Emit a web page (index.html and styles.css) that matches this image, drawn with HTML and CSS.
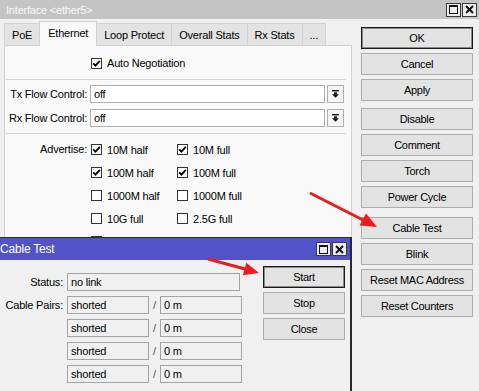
FILE: index.html
```html
<!DOCTYPE html>
<html>
<head>
<meta charset="utf-8">
<link rel="stylesheet" href="styles.css">
</head>
<body>
<div class="win main">
  <div class="titlebar inactive">
    <span class="title">Interface &lt;ether5&gt;</span>
    <div class="tbtns">
      <span class="tbtn"><svg width="9" height="9" viewBox="0 0 9 9"><rect x="0.5" y="0.5" width="8" height="8" fill="none" stroke="#111" stroke-width="1"/><rect x="0" y="0" width="9" height="2" fill="#111"/></svg></span>
      <span class="tbtn"><svg width="9" height="9" viewBox="0 0 9 9"><path d="M1 1L8 8M8 1L1 8" stroke="#111" stroke-width="2"/></svg></span>
    </div>
  </div>
  <div class="body">
    <div class="leftcol">
      <div class="tabs">
        <span class="tab">PoE</span>
        <span class="tab sel">Ethernet</span>
        <span class="tab">Loop Protect</span>
        <span class="tab">Overall Stats</span>
        <span class="tab">Rx Stats</span>
        <span class="tab">...</span>
      </div>
      <div class="panel">
        <div class="row autoneg">
          <span class="lbl"></span>
          <span class="cb on"><svg width="9" height="9" viewBox="0 0 9 9"><path d="M1.2 4.3L3.5 6.7L7.8 1.8" fill="none" stroke="#000" stroke-width="1.8"/></svg></span>
          <span class="cbl">Auto Negotiation</span>
        </div>
        <div class="sep s1"></div>
        <div class="row field tx">
          <span class="lbl">Tx Flow Control:</span>
          <span class="input">off</span>
          <span class="dd"><svg width="7" height="8" viewBox="0 0 7 8"><rect x="0" y="0" width="7" height="1.4" fill="#111"/><rect x="2" y="2.4" width="3" height="2" fill="#111"/><path d="M0 4.2H7L3.5 7.8Z" fill="#111"/></svg></span>
        </div>
        <div class="row field rx">
          <span class="lbl">Rx Flow Control:</span>
          <span class="input">off</span>
          <span class="dd"><svg width="7" height="8" viewBox="0 0 7 8"><rect x="0" y="0" width="7" height="1.4" fill="#111"/><rect x="2" y="2.4" width="3" height="2" fill="#111"/><path d="M0 4.2H7L3.5 7.8Z" fill="#111"/></svg></span>
        </div>
        <div class="sep s2"></div>
        <div class="adv">
          <span class="lbl">Advertise:</span>
          <div class="advgrid">
            <div class="opt"><span class="cb on"><svg width="9" height="9" viewBox="0 0 9 9"><path d="M1.2 4.3L3.5 6.7L7.8 1.8" fill="none" stroke="#000" stroke-width="1.8"/></svg></span><span class="cbl">10M half</span></div>
            <div class="opt"><span class="cb on"><svg width="9" height="9" viewBox="0 0 9 9"><path d="M1.2 4.3L3.5 6.7L7.8 1.8" fill="none" stroke="#000" stroke-width="1.8"/></svg></span><span class="cbl">10M full</span></div>
            <div class="opt"><span class="cb on"><svg width="9" height="9" viewBox="0 0 9 9"><path d="M1.2 4.3L3.5 6.7L7.8 1.8" fill="none" stroke="#000" stroke-width="1.8"/></svg></span><span class="cbl">100M half</span></div>
            <div class="opt"><span class="cb on"><svg width="9" height="9" viewBox="0 0 9 9"><path d="M1.2 4.3L3.5 6.7L7.8 1.8" fill="none" stroke="#000" stroke-width="1.8"/></svg></span><span class="cbl">100M full</span></div>
            <div class="opt"><span class="cb"></span><span class="cbl">1000M half</span></div>
            <div class="opt"><span class="cb"></span><span class="cbl">1000M full</span></div>
            <div class="opt"><span class="cb"></span><span class="cbl">10G full</span></div>
            <div class="opt"><span class="cb"></span><span class="cbl">2.5G full</span></div>
            <div class="opt"><span class="cb"></span><span class="cbl">5G full</span></div>
          </div>
        </div>
      </div>
    </div>
    <div class="btncol">
      <div class="grp">
        <span class="btn def">OK</span>
        <span class="btn">Cancel</span>
        <span class="btn">Apply</span>
      </div>
      <div class="grp g2">
        <span class="btn">Disable</span>
        <span class="btn">Comment</span>
        <span class="btn">Torch</span>
        <span class="btn">Power Cycle</span>
      </div>
      <div class="grp g3">
        <span class="btn">Cable Test</span>
        <span class="btn">Blink</span>
        <span class="btn">Reset MAC Address</span>
        <span class="btn">Reset Counters</span>
      </div>
    </div>
  </div>
</div>

<div class="win cable">
  <div class="titlebar active">
    <span class="title">Cable Test</span>
    <div class="tbtns">
      <span class="tbtn"><svg width="9" height="9" viewBox="0 0 9 9"><rect x="0.5" y="0.5" width="8" height="8" fill="none" stroke="#111" stroke-width="1"/><rect x="0" y="0" width="9" height="2" fill="#111"/></svg></span>
      <span class="tbtn"><svg width="9" height="9" viewBox="0 0 9 9"><path d="M1 1L8 8M8 1L1 8" stroke="#111" stroke-width="2"/></svg></span>
    </div>
  </div>
  <div class="cbody">
    <div class="cform">
      <div class="crow">
        <span class="clbl">Status:</span>
        <span class="ro wide">no link</span>
      </div>
      <div class="crow">
        <span class="clbl">Cable Pairs:</span>
        <span class="ro">shorted</span><span class="slash">/</span><span class="ro">0 m</span>
      </div>
      <div class="crow">
        <span class="clbl"></span>
        <span class="ro">shorted</span><span class="slash">/</span><span class="ro">0 m</span>
      </div>
      <div class="crow">
        <span class="clbl"></span>
        <span class="ro">shorted</span><span class="slash">/</span><span class="ro">0 m</span>
      </div>
      <div class="crow">
        <span class="clbl"></span>
        <span class="ro">shorted</span><span class="slash">/</span><span class="ro">0 m</span>
      </div>
    </div>
    <div class="cbtns">
      <span class="btn def">Start</span>
      <span class="btn">Stop</span>
      <span class="btn">Close</span>
    </div>
  </div>
</div>

<svg class="arrows" width="479" height="391" viewBox="0 0 479 391">
  <line x1="310" y1="193" x2="363" y2="220" stroke="#ec1c1c" stroke-width="3"/>
  <path d="M377 227L359.6 225.6L366 213.6Z" fill="#ec1c1c"/>
  <line x1="208" y1="259" x2="246" y2="269.3" stroke="#ec1c1c" stroke-width="3"/>
  <path d="M259 273L242.9 275.3L246.3 262.8Z" fill="#ec1c1c"/>
</svg>
</body>
</html>
```
FILE: styles.css
```css
* { box-sizing: border-box; }
html, body { margin: 0; padding: 0; }
body {
  width: 479px;
  height: 391px;
  overflow: hidden;
  position: relative;
  background: #f0f0f0;
  font-family: "Liberation Sans", Arial, sans-serif;
  font-size: 11px;
  letter-spacing: -0.2px;
  color: #000;
}
.win { background: #f0f0f0; }
.main { height: 391px; display: flex; flex-direction: column; }
.titlebar {
  height: 19px;
  display: flex;
  align-items: center;
  justify-content: space-between;
  flex-shrink: 0;
}
.titlebar.inactive { background: #c4c4c4; color: #f7f7f7; padding: 0 2px 0 6px; }
.titlebar.active { background: #5353c9; color: #fff; height: 22px; padding: 0 3px 0 5px; font-size: 12px; }
.tbtns { display: flex; gap: 1px; }
.tbtn {
  width: 15px; height: 14px;
  border: 1px solid #3a3a3a;
  background: #ececec;
  display: flex; align-items: center; justify-content: center;
}
.body { flex: 1; display: flex; min-height: 0; }
.leftcol { margin-left: 4px; width: 348px; display: flex; flex-direction: column; }
.tabs { display: flex; height: 26px; align-items: flex-end; position: relative; z-index: 1; }
.tab {
  height: 22px;
  padding: 0 7px;
  display: flex; align-items: center;
  background: #e3e3e3;
  border: 1px solid #d2d2d2;
  border-bottom: none;
  margin-right: -1px;
}
.tab.sel {
  height: 25px;
  background: #f9f9f9;
  margin-bottom: -1px;
  padding: 0 8px 3px;
  border-color: #d2d2d2;
  position: relative;
}
.panel {
  flex: 1;
  background: #f9f9f9;
  border: 1px solid #d2d2d2;
  border-bottom: none;
}
.row { display: flex; align-items: center; }
.lbl { width: 82px; text-align: right; margin-right: 3px; flex-shrink: 0; }
.autoneg { height: 14px; margin-top: 10px; }
.autoneg .cb { margin-left: 1px; }
.sep { height: 1px; background: #d4d4d4; margin: 0 5px 0 1px; }
.s1 { margin-top: 9px; }
.s2 { margin-top: 6px; }
.field { height: 18px; }
.tx { margin-top: 5px; }
.rx { margin-top: 6px; }
.input {
  width: 235px; height: 18px;
  background: #fff;
  border: 1px solid #b0b0b0;
  padding-left: 3px;
  display: flex; align-items: center;
}
.dd {
  width: 17px; height: 18px;
  margin-left: 2px;
  border: 1px solid #b0b0b0;
  background: #f4f4f4;
  display: flex; align-items: center; justify-content: center;
}
.cb {
  width: 11px; height: 11px;
  border: 1px solid #333;
  background: #fff;
  display: inline-flex; align-items: center; justify-content: center;
  flex-shrink: 0;
}
.cbl { margin-left: 5px; }
.adv { display: flex; margin-top: 4px; }
.adv .lbl { height: 23px; line-height: 23px; }
.advgrid { display: grid; grid-template-columns: 86px 86px; grid-auto-rows: 23px; margin-left: 1px; }
.opt { display: flex; align-items: center; }

.btncol { margin-left: 9px; width: 112px; padding-top: 8px; }
.grp { display: flex; flex-direction: column; gap: 4px; }
.g2 { margin-top: 7px; }
.g3 { margin-top: 9px; }
.btn {
  height: 22px;
  display: flex; align-items: center; justify-content: center;
  background: #e3e3e3;
  border: 1px solid #acacac;
  letter-spacing: -0.3px;
}
.btn.def { border: 1px solid #1a1a1a; box-shadow: inset 0 0 0 1px #8a8a8a; }

.cable {
  position: absolute;
  left: -6px;
  top: 237px;
  width: 358px;
  height: 170px;
  border: 1px solid #2a2a2a;
  border-right-width: 2px;
}
.cbody { display: flex; }
.cform { padding-top: 13px; padding-left: 0; }
.crow { display: flex; align-items: center; height: 18px; margin-bottom: 5px; }
.clbl { width: 68px; text-align: right; margin-right: 4px; }
.ro {
  width: 82px; height: 18px;
  border: 1px solid #a4a4a4;
  background: #f0f0f0;
  padding-left: 3px;
  display: flex; align-items: center;
}
.ro.wide { width: 173px; }
.slash { width: 11px; text-align: center; color: #555; }
.cbtns { display: flex; flex-direction: column; gap: 4px; width: 82px; margin-left: 21px; padding-top: 6px; }
.cbtns .btn { height: 22px; }
.arrows { position: absolute; left: 0; top: 0; pointer-events: none; }
```
